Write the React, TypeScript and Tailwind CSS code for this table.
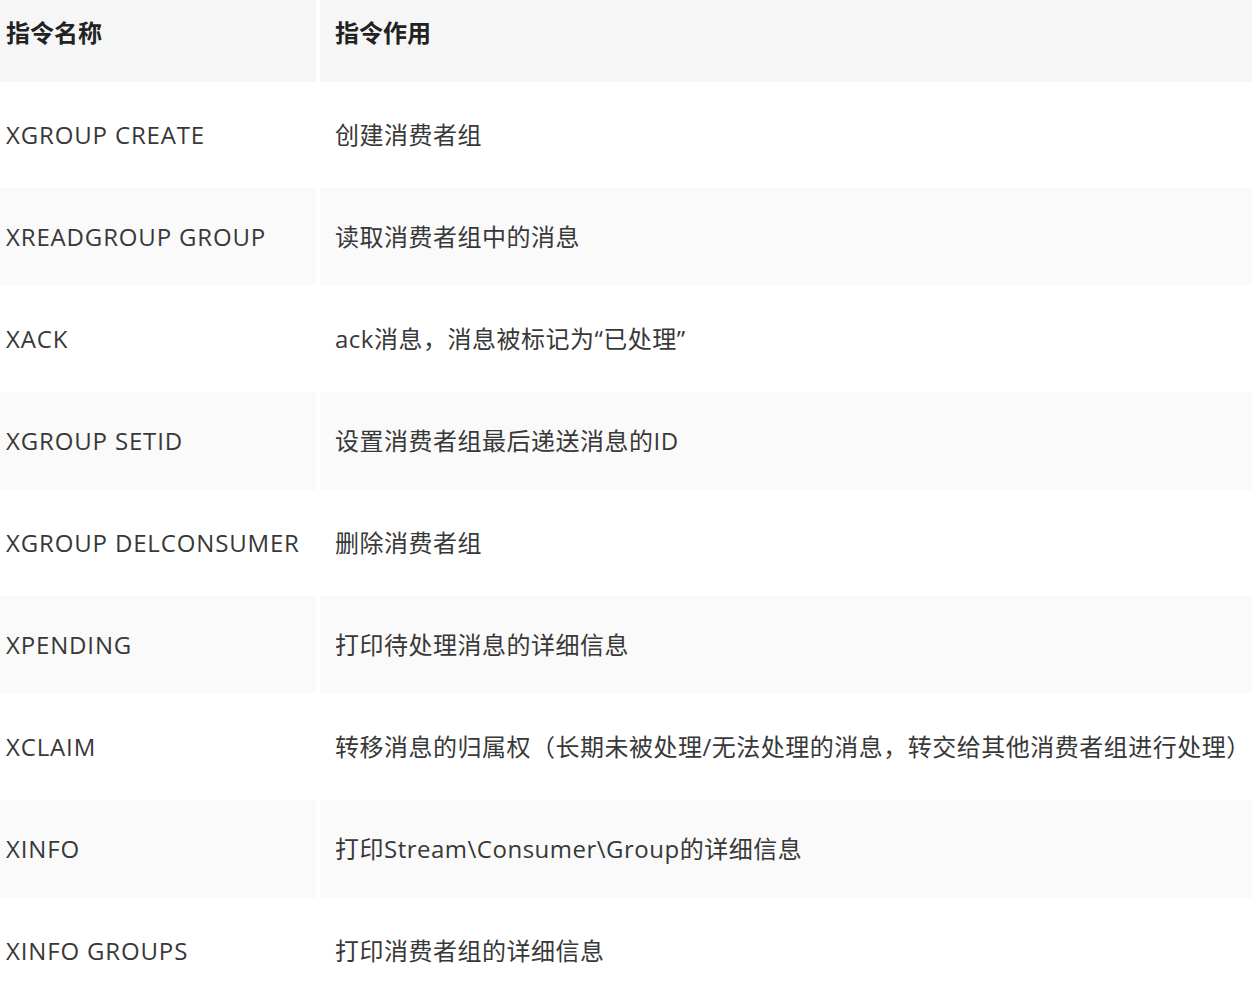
const ROWS: [string, string][] = [
  ["XGROUP CREATE", "创建消费者组"],
  ["XREADGROUP GROUP", "读取消费者组中的消息"],
  ["XACK", "ack消息，消息被标记为“已处理”"],
  ["XGROUP SETID", "设置消费者组最后递送消息的ID"],
  ["XGROUP DELCONSUMER", "删除消费者组"],
  ["XPENDING", "打印待处理消息的详细信息"],
  ["XCLAIM", "转移消息的归属权（长期未被处理/无法处理的消息，转交给其他消费者组进行处理）"],
  ["XINFO", "打印Stream\\Consumer\\Group的详细信息"],
  ["XINFO GROUPS", "打印消费者组的详细信息"],
];

export default function App() {
  return (
    <div
      className="w-[1252px] h-[999px] overflow-hidden bg-white text-[24px] text-[#383838]"
      style={{ fontFamily: '"Segoe UI", "Open Sans", "Noto Sans CJK SC", sans-serif' }}
    >
      <div className="grid grid-cols-[316px_1fr] gap-1">
        {/* header */}
        <div className="h-[82px] pb-4 pl-[6px] flex items-center bg-[#f6f6f6] font-bold text-[#222]">指令名称</div>
        <div className="h-[82px] pb-4 pl-[15px] flex items-center bg-[#f6f6f6] font-bold text-[#222]">指令作用</div>

        {ROWS.map(([cmd, desc], i) => {
          const bg = i % 2 === 1 ? "bg-[#fafafa]" : "bg-white";
          return [
            <div key={cmd + "-a"} className={`h-[98px] pl-[6px] flex items-center whitespace-nowrap tracking-[0.85px] ${bg}`}>
              {cmd}
            </div>,
            <div key={cmd + "-b"} className={`h-[98px] pl-[15px] flex items-center whitespace-nowrap tracking-[0.5px] ${bg}`}>
              {desc}
            </div>,
          ];
        })}
      </div>
    </div>
  );
}
